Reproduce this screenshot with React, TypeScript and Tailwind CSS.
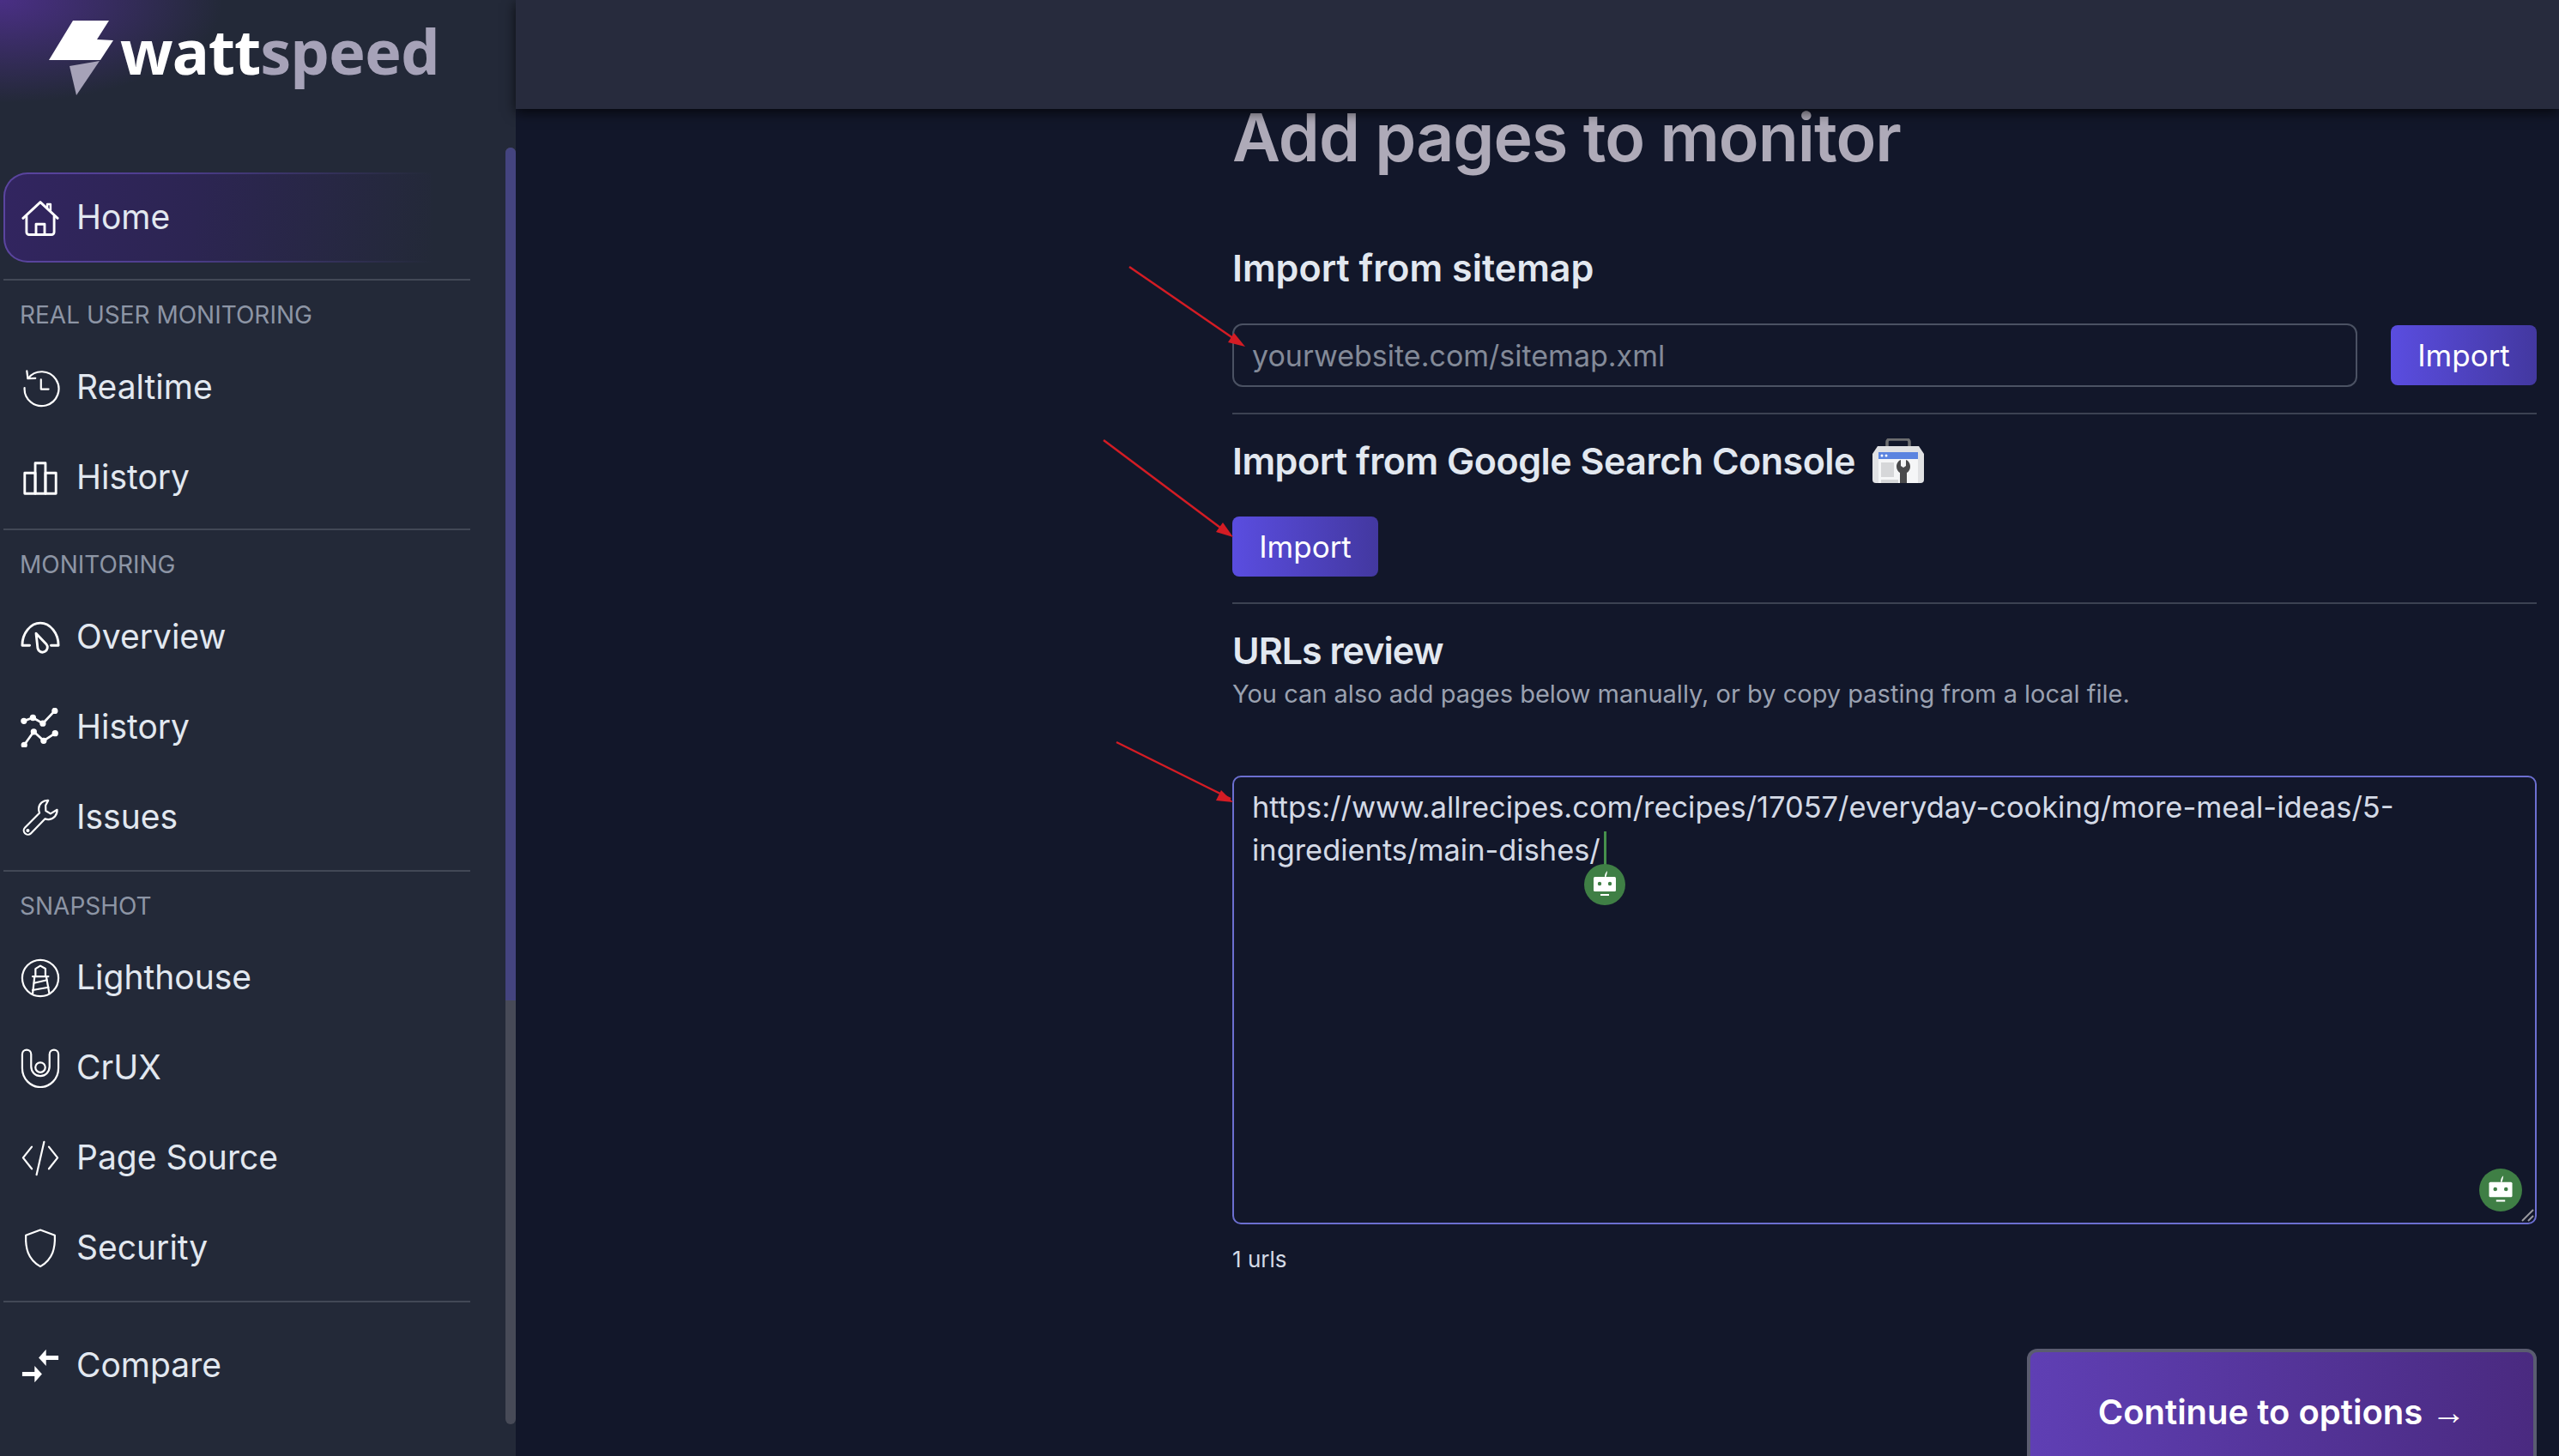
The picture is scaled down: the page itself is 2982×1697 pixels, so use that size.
import React from "react";

const FONT = "font-['Inter','Liberation_Sans',sans-serif]";

function I({ children }: { children: React.ReactNode }) {
  return (
    <svg viewBox="0 0 24 24" className="w-[46px] h-[46px] shrink-0" fill="none" stroke="#ffffff" strokeWidth="1.15" strokeLinecap="round" strokeLinejoin="round">
      {children}
    </svg>
  );
}

const HomeIcon = () => (
  <I>
    <path d="M1.500 12.200 12 2.400l10.500 9.800" strokeWidth="1.500" />
    <path d="M16.200 5.600V3.600h2v3.800" strokeWidth="1.300" />
    <path d="M3.600 11v9.600a1.600 1.600 0 0 0 1.600 1.600h13.600a1.600 1.600 0 0 0 1.600-1.600V11" strokeWidth="1.500" />
    <path d="M9.400 22v-6.200h5.200V22" strokeWidth="1.500" />
  </I>
);
const ClockIcon = () => (
  <I>
    <path d="M4.600 6.200A10.400 10.400 0 1 1 2.400 12" />
    <path d="M3.800 1.800l.6 4.600 4.600-.2" />
    <path d="M12.400 7v5.800h4.600" />
  </I>
);
const BarsIcon = () => (
  <I>
    <path d="M2.500 9h6.400v12.500H2.500z" strokeWidth="1.500" />
    <path d="M8.900 3h6.200v18.500H8.900z" strokeWidth="1.500" />
    <path d="M15.100 9h6.400v12.500h-6.400z" strokeWidth="1.500" />
  </I>
);
const GaugeIcon = () => (
  <I>
    <path d="M5.500 16.800H1C1 9.500 6 3.200 12 3.200S23 9.500 23 16.800h-4.500" strokeWidth="1.500" />
    <path d="M9.400 9.500 15.600 16a3 3 0 1 1-5.200 2.600z" strokeWidth="1.500" />
  </I>
);
const ChartIcon = () => (
  <I>
    <g strokeWidth="1.400" fill="#fff">
      <path d="M2 8l5.500-2 6 3.500L20.800 1.800" fill="none" />
      <path d="M2.200 22.600 8 14.500l6 5.500 7-4.500" fill="none" />
      <circle cx="2" cy="8" r="1.200" />
      <circle cx="7.500" cy="6" r="1.200" />
      <circle cx="13.500" cy="9.500" r="1.200" />
      <circle cx="20.800" cy="1.800" r="1.200" />
      <circle cx="2.200" cy="22.600" r="1.200" />
      <circle cx="8" cy="14.500" r="1.200" />
      <circle cx="14" cy="20" r="1.200" />
      <circle cx="21" cy="15.500" r="1.200" />
    </g>
  </I>
);
const WrenchIcon = () => (
  <I>
    <path d="M16.800 1.500c-3-.2-5.800 2-5.800 5.200 0 .9.200 1.700.5 2.400L2.700 18a2.500 2.500 0 0 0 3.500 3.600l8.700-8.900c.7.300 1.500.5 2.300.4 3-.2 5.200-2.800 5-5.900l-4 2.400-2.900-1.800-.1-3.200z" />
    <circle cx="4.400" cy="19.800" r=".5" />
  </I>
);
const LighthouseIcon = () => (
  <I>
    <circle cx="12" cy="12" r="11" />
    <path d="M9.050 10.800V6.300L12 4.500l3.100 1.800v4.500" />
    <path d="M7.300 11h9.600" />
    <path d="M8.500 11 7.300 21.900M15.600 11l1.800 10" />
    <path d="M8.200 15 16 13.200M7.300 19.300l9.600-1.700" />
  </I>
);
const CruxIcon = () => (
  <I>
    <path d="M1 3.500a2.700 2.700 0 0 1 5.400 0V11c0 3.200 2.500 5.800 5.600 5.800s5.600-2.600 5.600-5.800V3.500a2.700 2.700 0 0 1 5.400 0V12c0 6.400-5 11.500-11 11.500S1 18.400 1 12z" />
    <circle cx="12" cy="11.500" r="3" />
  </I>
);
const CodeIcon = () => (
  <I>
    <path d="M6.800 5 1.500 11.700l5.300 6.700M17.200 5l5.300 6.700-5.300 6.700M14.300 2 9.700 22" />
  </I>
);
const ShieldIcon = () => (
  <I>
    <path d="M12 .8 3.200 4c-.3 7.500 1 14.500 8.800 19 7.800-4.500 9.100-11.500 8.800-19z" />
  </I>
);
const CompareIcon = () => (
  <svg viewBox="0 0 24 24" className="w-[46px] h-[46px] shrink-0" fill="#ffffff">
    <path d="M11 7 15.500 2v3.700H23v2.600h-7.500V12zM13 17l-4.500 5v-3.700H1v-2.600h7.500V12z" />
  </svg>
);

function Bot({ className }: { className: string }) {
  return (
    <svg viewBox="0 0 48 48" className={className}>
      <circle cx="24" cy="24" r="24" fill="#3f7f45" />
      <path d="M24 15c0-3 1-5 3-7-.2 3-1 5.500-1.600 7z" fill="#fff" />
      <rect x="11" y="15" width="26" height="17" rx="1.500" fill="#fff" />
      <circle cx="18" cy="23" r="2.200" fill="#3f7f45" />
      <circle cx="30" cy="23" r="2.200" fill="#3f7f45" />
      <rect x="19" y="35" width="10" height="2" fill="#fff" />
    </svg>
  );
}

function GscIcon() {
  return (
    <svg viewBox="0 0 60 52" className="w-[60px] h-[52px] shrink-0">
      <path d="M17 10V4a3 3 0 0 1 3-3h20a3 3 0 0 1 3 3v6" fill="none" stroke="#6d6e70" strokeWidth="3.500" />
      <path d="M6 9h48l6 9v30a4 4 0 0 1-4 4H4a4 4 0 0 1-4-4V18z" fill="#e1e2e4" />
      <rect x="7" y="16" width="46" height="36" fill="#f5f6f7" />
      <rect x="7" y="16" width="46" height="8" fill="#5b84e0" />
      <circle cx="11" cy="20" r="1.500" fill="#fff" />
      <circle cx="16" cy="20" r="1.500" fill="#fff" />
      <rect x="10" y="28" width="15" height="17" fill="#d6d7d9" />
      <rect x="10" y="48" width="20" height="4" fill="#d6d7d9" />
      <path d="M28 33c0-4 2-7 5-8v7l3 2 3-2v-7c3 1 5 4 5 8 0 3-2 6-4 7v12h-8V40c-2-1-4-4-4-7z" fill="#4a4a4c" />
    </svg>
  );
}

function Row({ icon, label }: { icon: React.ReactNode; label: string }) {
  return (
    <div className="flex items-center h-[105px] pl-[24px] gap-[19px]">
      {icon}
      <span className="text-[39px] text-[#e2e8f0]">{label}</span>
    </div>
  );
}
const Label = ({ children, className = "mb-[12px]" }: { children: string; className?: string }) => (
  <div className={`h-[40px] leading-[40px] pl-[23px] text-[28px] text-[#8d95a5] mt-[20px] ${className}`}>{children}</div>
);
const Rule = ({ className = "" }: { className?: string }) => (
  <div className={`h-[2px] w-[544px] ml-[4px] shrink-0 bg-[#424856] ${className}`} />
);

const Btn = ({ className = "" }: { className?: string }) => (
  <button className={`h-[70px] w-[170px] shrink-0 rounded-[8px] text-[35px] text-white bg-[linear-gradient(90deg,#5a4de0,#4338a0)] ${className}`}>Import</button>
);
const Head = ({ children, className = "" }: { children: React.ReactNode; className?: string }) => (
  <h2 className={`h-[48px] leading-[48px] text-[43px] font-semibold text-[#e2e8f0] ${className}`}>{children}</h2>
);
const Hr = ({ className = "" }: { className?: string }) => <div className={`h-[2px] bg-[#3c4252] ${className}`} />;

export default function App() {
  return (
    <div className={`flex h-[1697px] overflow-hidden bg-[#12172a] ${FONT}`}>
      <aside className="relative w-[601px] shrink-0 bg-[#232938]">
        <div className="h-[128px] flex items-center pl-[56px] gap-[8px] bg-[radial-gradient(ellipse_260px_120px_at_0_0,#4a2f85,transparent)]">
          <svg viewBox="0 0 76 90" className="w-[76px] h-[90px] shrink-0 mt-[10px]">
            <path d="M29 0H71L57 22 76 23 61 46H1z" fill="#ffffff" />
            <path d="M25 53 60 47 33 87z" fill="#a6a2b8" />
          </svg>
          <span className="text-[72px] font-bold leading-none -mt-[10px] font-['Noto_Sans',sans-serif] tracking-[-1px]">
            <span className="text-white">watt</span>
            <span className="text-[#a6a2b8]">speed</span>
          </span>
        </div>

        <nav className="flex flex-col pt-[73px]">
          <div className="h-[105px] w-[500px] ml-[4px] p-[2px] rounded-l-[28px] bg-[linear-gradient(90deg,#5b45a0,#4d3d8d_40%,#232938)]">
            <div className="flex items-center h-full pl-[18px] gap-[19px] rounded-l-[26px] bg-[linear-gradient(100deg,#322560,#2c2552_45%,#232938)]">
              <HomeIcon />
              <span className="text-[39px] text-[#e2e8f0]">Home</span>
            </div>
          </div>
          <Rule className="mt-[19px]" />
          <Label>REAL USER MONITORING</Label>
          <Row icon={<ClockIcon />} label="Realtime" />
          <Row icon={<BarsIcon />} label="History" />
          <Rule className="mt-[7px]" />
          <Label>MONITORING</Label>
          <Row icon={<GaugeIcon />} label="Overview" />
          <Row icon={<ChartIcon />} label="History" />
          <Row icon={<WrenchIcon />} label="Issues" />
          <Rule className="mt-[9px]" />
          <Label className="mb-[11px]">SNAPSHOT</Label>
          <Row icon={<LighthouseIcon />} label="Lighthouse" />
          <Row icon={<CruxIcon />} label="CrUX" />
          <Row icon={<CodeIcon />} label="Page Source" />
          <Row icon={<ShieldIcon />} label="Security" />
          <Rule className="mt-[9px]" />
          <div className="mt-[21px]">
            <Row icon={<CompareIcon />} label="Compare" />
          </div>
        </nav>

        <div className="absolute left-[589px] top-[172px] w-[12px] h-[1488px] rounded-full bg-[#474a57]">
          <div className="h-[994px] rounded-t-full bg-[#44447f]" />
        </div>
      </aside>

      <main className="relative flex-1 flex flex-col min-w-0">
        <header className="relative z-10 h-[127px] shrink-0 bg-[#272b3d] shadow-[0_4px_14px_rgba(0,0,0,0.7)]" />
        <div className="pl-[835px] pr-[26px] flex flex-col">
          <h1 className="h-[70px] leading-[66px] text-[77px] font-semibold text-[#aeaab8] tracking-[-1px] whitespace-nowrap">Add pages to monitor</h1>
          <Head className="mt-[91px]">Import from sitemap</Head>
          <div className="flex items-center gap-[39px] mt-[41px]">
            <div className="flex-1 h-[74px] flex items-center px-[21px] rounded-[12px] border-2 border-[#4b5263] text-[34px] text-[#838a98]">yourwebsite.com/sitemap.xml</div>
            <Btn />
          </div>
          <Hr className="mt-[30px]" />
          <div className="flex items-center gap-[20px] mt-[30px] h-[48px]">
            <Head className="tracking-[-0.5px]">Import from Google Search Console</Head>
            <GscIcon />
          </div>
          <Btn className="mt-[41px]" />
          <Hr className="mt-[30px]" />
          <Head className="mt-[30px] tracking-[-1px]">URLs review</Head>
          <p className="mt-[7px] h-[40px] leading-[40px] text-[29px] text-[#9aa1b0]">You can also add pages below manually, or by copy pasting from a local file.</p>
          <div className="relative mt-[75px] h-[523px]">
            <textarea
              readOnly
              className="block w-full h-full resize-none rounded-[10px] border-2 border-[#6c6fd0] bg-transparent px-[21px] py-[10px] text-[34.400px] leading-[50px] text-[#d4dae6] outline-none"
              value={"https://www.allrecipes.com/recipes/17057/everyday-cooking/more-meal-ideas/5-\ningredients/main-dishes/"}
            />
            <div className="absolute left-[433px] top-[65px] w-[3px] h-[46px] bg-[#46904c]" />
            <Bot className="absolute left-[410px] top-[103px] w-[48px] h-[48px]" />
            <Bot className="absolute left-[1453px] top-[458px] w-[50px] h-[50px]" />
            <svg viewBox="0 0 16 16" className="absolute right-[3px] bottom-[3px] w-[16px] h-[16px]" fill="none" strokeWidth="2">
              <path d="M2 15 15 2" stroke="#9a9aa0" />
              <path d="M9 15 15 9" stroke="#9a9aa0" />
            </svg>
          </div>
          <p className="mt-[25px] h-[32px] leading-[32px] text-[26px] text-[#d4dae6]">1 urls</p>
          <button className="mt-[88px] ml-auto w-[594px] h-[160px] pb-[12px] shrink-0 rounded-[12px] border-[4px] border-[#5a5c70] bg-[linear-gradient(90deg,#5f3fb4,#4a2a80)] text-[40px] font-semibold text-white">
            Continue to options <span className="font-normal font-['Liberation_Sans',sans-serif]">→</span>
          </button>
        </div>

        <svg className="absolute left-0 top-0 w-[2381px] h-[1000px] pointer-events-none" viewBox="0 0 2381 1000" fill="none">
          <g stroke="#d41c24" strokeWidth="2.500">
            <path d="M715 311 843 399" />
            <path d="M685 513 829 621" />
            <path d="M700 865 833 931" />
          </g>
          <g fill="#d41c24">
            <path d="M850 404 830 399 837 388z" />
            <path d="M836 626 816 620 824 609z" />
            <path d="M836 935 816 933 822 921z" />
          </g>
        </svg>
      </main>
    </div>
  );
}
